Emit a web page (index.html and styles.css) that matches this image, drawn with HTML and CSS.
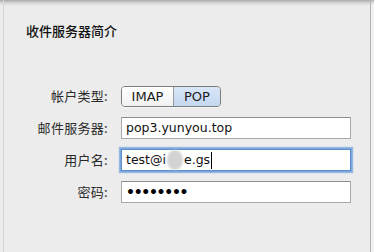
FILE: index.html
```html
<!DOCTYPE html>
<html lang="zh-CN">
<head>
<meta charset="utf-8">
<link rel="stylesheet" href="styles.css">
</head>
<body>
<div class="frame">
  <div class="panel">
    <div class="title">收件服务器简介</div>
    <div class="form">
      <div class="label">帐户类型:</div>
      <div class="control">
        <div class="segmented">
          <div class="seg">IMAP</div>
          <div class="seg selected">POP</div>
        </div>
      </div>
      <div class="label">邮件服务器:</div>
      <div class="field">pop3.yunyou.top</div>
      <div class="label">用户名:</div>
      <div class="field focused"><span>test@i</span><span class="redact"></span><span>e.gs</span><span class="caret"></span></div>
      <div class="label">密码:</div>
      <div class="field"><span class="dots">••••••••</span></div>
    </div>
  </div>
  <div class="gutter"></div>
</div>
</body>
</html>
```
FILE: styles.css
```css
html, body {
  margin: 0;
  padding: 0;
}
body {
  width: 374px;
  height: 252px;
  overflow: hidden;
  background: linear-gradient(to bottom, #a9a9a9 0, #dcdcdc 3px, #ececec 6px);
  font-family: "Noto Sans CJK SC", "DejaVu Sans", sans-serif;
}
.frame {
  display: flex;
  height: 252px;
  padding-left: 3px;
}
.panel {
  border-left: 1px solid #d4d4d4;
  border-right: 1px solid #b3b3b3;
  background: linear-gradient(to bottom, #a9a9a9 0, #d8d8d8 3px, #ececec 6px);
  padding-left: 22px;
  box-sizing: border-box;
  width: 368px;
  padding-top: 23px;
}
.gutter {
  flex: 1;
  background: linear-gradient(to bottom, #b0b0b0 0, #e2e2e2 3px, #f1f1f1 6px);
}
.title {
  font-size: 13px;
  line-height: 16px;
  color: #111;
  font-weight: 500;
}
.form {
  margin-top: 46px;
  margin-left: -22px;
  display: grid;
  grid-template-columns: 104px 230px;
  column-gap: 13px;
  row-gap: 10px;
  grid-auto-rows: 22px;
  align-items: center;
}
.label {
  text-align: right;
  font-size: 13px;
  line-height: 16px;
  color: #2a2a2a;
  letter-spacing: 0.3px;
}
.control {
  display: flex;
  align-items: center;
}
.segmented {
  display: flex;
  height: 21px;
  border: 1px solid #7b7b7b;
  border-radius: 4px;
  overflow: hidden;
  box-sizing: border-box;
  box-shadow: 0 1px 0 rgba(255,255,255,0.6);
}
.seg {
  font-family: "DejaVu Sans", sans-serif;
  font-size: 13px;
  line-height: 19px;
  color: #1c1c1c;
  text-align: center;
  background: linear-gradient(to bottom, #ffffff, #f1f1f1);
}
.seg:first-child {
  width: 51px;
  border-right: 1px solid #9a9a9a;
}
.seg.selected {
  width: 46px;
  background: linear-gradient(to bottom, #d9e7f7, #c3d7ef);
}
.field {
  height: 22px;
  box-sizing: border-box;
  border: 1px solid #a9a9a9;
  border-top-color: #8e8e8e;
  background: #fff;
  font-family: "DejaVu Sans", sans-serif;
  font-size: 12.5px;
  line-height: 20px;
  color: #111;
  padding-left: 4px;
  display: flex;
  align-items: center;
  white-space: nowrap;
}
.field.focused {
  border-color: #5d8fcf;
  box-shadow: 0 0 0 1px #7ba6dc, 0 0 1px 2px rgba(120,165,220,0.75);
}
.redact {
  display: inline-block;
  width: 16px;
  height: 20px;
  margin: 0 1px;
  border-radius: 50%;
  background: #d2d2d2;
  filter: blur(1px);
  align-self: center;
}
.caret {
  display: inline-block;
  width: 1px;
  height: 17px;
  background: #000;
  margin-left: 1px;
}
.dots {
  font-size: 14px;
  font-weight: bold;
  letter-spacing: -1.3px;
  line-height: 20px;
  color: #000;
}
```
